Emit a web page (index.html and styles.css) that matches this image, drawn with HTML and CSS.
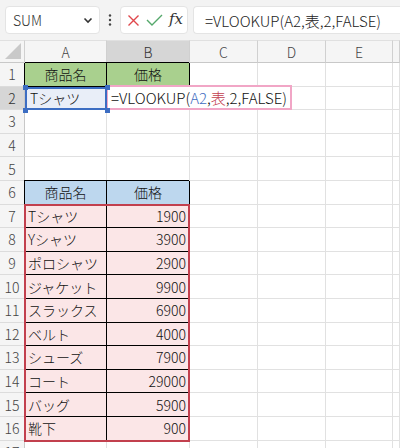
FILE: index.html
```html
<!DOCTYPE html>
<html lang="ja">
<head>
    <meta charset="UTF-8">
    <title>VLOOKUP</title>
    <link rel="stylesheet" href="styles.css">
</head>
<body>

    <!-- formula bar -->
    <div class="toolbar">
        <div class="namebox">
            <span>SUM</span>
            <svg width="10" height="7" viewBox="0 0 10 7"><path d="M1.5 1.5 L5 5 L8.5 1.5" fill="none" stroke="#333" stroke-width="1.6"/></svg>
        </div>
        <div class="dots">
            <svg width="4" height="12" viewBox="0 0 4 12"><circle cx="2" cy="1.5" r="1.2" fill="#444"/><circle cx="2" cy="6" r="1.2" fill="#444"/><circle cx="2" cy="10.5" r="1.2" fill="#444"/></svg>
        </div>
        <div class="fxbtns">
            <svg width="13" height="13" viewBox="0 0 13 13"><path d="M1.5 1.5 L11.5 11.5 M11.5 1.5 L1.5 11.5" stroke="#e0474c" stroke-width="1.4"/></svg>
            <svg width="17" height="12" viewBox="0 0 17 12"><path d="M1 6 L6 11 L16 1" fill="none" stroke="#54a86b" stroke-width="1.4"/></svg>
            <span class="fx">fx</span>
        </div>
        <div class="formula">=VLOOKUP(A2,表,2,FALSE)</div>
    </div>

    <div class="sheet">
        <div class="grid">
            <div class="corner"><span class="tri"></span></div><div class="ch">A</div><div class="ch sel">B</div><div class="ch">C</div><div class="ch">D</div><div class="ch">E</div><div class="ch"></div>

            <div class="rh">1</div><div class="c g ctr">商品名</div><div class="c g ctr">価格</div><div class="c"></div><div class="c"></div><div class="c"></div><div class="c"></div>
            <div class="rh sel">2</div><div class="c ref">Tシャツ</div><div class="c"></div><div class="c"></div><div class="c"></div><div class="c"></div><div class="c"></div>
            <div class="rh">3</div><div class="c"></div><div class="c"></div><div class="c"></div><div class="c"></div><div class="c"></div><div class="c"></div>
            <div class="rh">4</div><div class="c"></div><div class="c"></div><div class="c"></div><div class="c"></div><div class="c"></div><div class="c"></div>
            <div class="rh">5</div><div class="c"></div><div class="c"></div><div class="c"></div><div class="c"></div><div class="c"></div><div class="c"></div>
            <div class="rh">6</div><div class="c b ctr">商品名</div><div class="c b ctr">価格</div><div class="c"></div><div class="c"></div><div class="c"></div><div class="c"></div>
            <div class="rh">7</div><div class="c p">Tシャツ</div><div class="c p num">1900</div><div class="c"></div><div class="c"></div><div class="c"></div><div class="c"></div>
            <div class="rh">8</div><div class="c p">Yシャツ</div><div class="c p num">3900</div><div class="c"></div><div class="c"></div><div class="c"></div><div class="c"></div>
            <div class="rh">9</div><div class="c p">ポロシャツ</div><div class="c p num">2900</div><div class="c"></div><div class="c"></div><div class="c"></div><div class="c"></div>
            <div class="rh">10</div><div class="c p">ジャケット</div><div class="c p num">9900</div><div class="c"></div><div class="c"></div><div class="c"></div><div class="c"></div>
            <div class="rh">11</div><div class="c p">スラックス</div><div class="c p num">6900</div><div class="c"></div><div class="c"></div><div class="c"></div><div class="c"></div>
            <div class="rh">12</div><div class="c p">ベルト</div><div class="c p num">4000</div><div class="c"></div><div class="c"></div><div class="c"></div><div class="c"></div>
            <div class="rh">13</div><div class="c p">シューズ</div><div class="c p num">7900</div><div class="c"></div><div class="c"></div><div class="c"></div><div class="c"></div>
            <div class="rh">14</div><div class="c p">コート</div><div class="c p num">29000</div><div class="c"></div><div class="c"></div><div class="c"></div><div class="c"></div>
            <div class="rh">15</div><div class="c p">バッグ</div><div class="c p num">5900</div><div class="c"></div><div class="c"></div><div class="c"></div><div class="c"></div>
            <div class="rh">16</div><div class="c p">靴下</div><div class="c p num">900</div><div class="c"></div><div class="c"></div><div class="c"></div><div class="c"></div>
            <div class="rh">17</div><div class="c"></div><div class="c"></div><div class="c"></div><div class="c"></div><div class="c"></div><div class="c"></div>
        </div>

        <!-- range highlights drawn on top of the cells -->
        <div class="grid over">
            <div class="range"></div>
            <div class="edit">=VLOOKUP(<span class="blue">A2</span>,<span class="red">表</span>,2,FALSE)</div>
        </div>
    </div>

</body>
</html>
```

FILE: styles.css
```css
body {
    margin: 0;
    background-color: #fff;
    font-family: "Noto Sans CJK JP", sans-serif;
    font-weight: 300;
    color: #111;
    overflow: hidden;
}
.toolbar {
    height: 40px;
    background-color: #f3f3f3;
    display: flex;
    align-items: center;
    padding-left: 5px;
}
.namebox, .fxbtns, .formula {
    height: 28px;
    box-sizing: border-box;
    background-color: #fff;
    border: 1px solid #e4e4e4;
    border-radius: 4px;
    display: flex;
    align-items: center;
}
.namebox {
    width: 95px;
    justify-content: space-between;
    padding: 0 6px 0 7px;
    font-size: 14px;
    color: #333;
}
.dots {
    width: 20px;
    display: flex;
    justify-content: center;
}
.fxbtns {
    width: 68px;
    justify-content: space-between;
    padding: 0 4px 0 6px;
}
.fx {
    font-family: "DejaVu Serif", "Liberation Serif", serif;
    font-style: italic;
    font-size: 15px;
    color: #333;
    margin-top: -3px;
}
.formula {
    flex: 1;
    margin-left: 5px;
    border-right: none;
    border-radius: 4px 0 0 4px;
    padding-left: 11px;
    font-size: 15px;
    color: #222;
}

.sheet {
    display: grid;
}
.grid {
    grid-area: 1 / 1;
    display: grid;
    grid-template-columns: 25px 82px 83px 68px 68px 67px 1fr;
    grid-template-rows: 23px;
    grid-auto-rows: 23.6px;
}
.grid > div {
    box-sizing: border-box;
}
.corner {
    background-color: #f5f5f5;
    border-right: 1px solid #d0d0d0;
    border-bottom: 1px solid #c8c8c8;
    border-top: 1px solid #e0e0e0;
    position: relative;
}
.tri {
    position: absolute;
    right: 3px;
    bottom: 3px;
    width: 0;
    height: 0;
    border-left: 16px solid transparent;
    border-bottom: 16px solid #c9c9c9;
}
.ch {
    background-color: #f5f5f5;
    border-right: 1px solid #d0d0d0;
    border-bottom: 1px solid #c8c8c8;
    border-top: 1px solid #e0e0e0;
    font-size: 14px;
    color: #444;
    display: flex;
    align-items: center;
    justify-content: center;
}
.rh {
    background-color: #f5f5f5;
    border-right: 1px solid #c8c8c8;
    border-bottom: 1px solid #dcdcdc;
    font-size: 14px;
    color: #444;
    display: flex;
    align-items: center;
    justify-content: center;
}
.ch.sel, .rh.sel {
    background-color: #d6d6d6;
    color: #333;
}
.c {
    border-right: 1px solid #e1e1e1;
    border-bottom: 1px solid #e1e1e1;
    font-size: 14px;
    padding: 0 3px;
    display: flex;
    align-items: center;
    white-space: nowrap;
}
.ctr {
    justify-content: center;
}
.num {
    justify-content: flex-end;
}
.g, .b, .p {
    border-right-color: #000;
    border-bottom-color: #000;
    box-shadow: -1px -1px 0 #000;
}
.g {
    background-color: #a9d08e;
}
.b {
    background-color: #bdd7ee;
}
.p {
    background-color: #fbe6e7;
}
.ref {
    background-color: #e9eef8;
    border: 2px solid #3c6dc2;
    position: relative;
}
.ref::before {
    content: "";
    position: absolute;
    left: -4px;
    top: -4px;
    width: 5px;
    height: 5px;
    background-color: #3c6dc2;
    box-shadow: 82px 0 0 #3c6dc2, 0 23px 0 #3c6dc2, 82px 23px 0 #3c6dc2;
}

.over {
    pointer-events: none;
}
.range {
    grid-column: 2 / 4;
    grid-row: 8 / 18;
    margin: -1px 0 -1px -1px;
    border: 2px solid #c2404e;
}
.edit {
    grid-column: 3 / 8;
    grid-row: 3;
    justify-self: start;
    margin: -2px 0 0 -1px;
    background-color: #fff;
    border: 2px solid #f1a6c6;
    padding: 0 3px 0 3px;
    font-size: 15px;
    line-height: 21px;
    white-space: nowrap;
}
.blue {
    color: #3f6cc0;
}
.red {
    color: #c2404e;
}
```
